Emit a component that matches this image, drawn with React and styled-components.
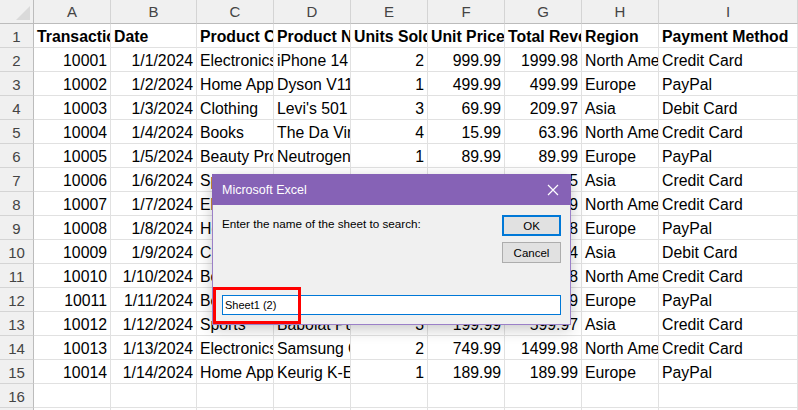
import React from 'react';
import styled, { createGlobalStyle } from 'styled-components';

const GlobalStyle = createGlobalStyle`
  html, body {
    margin: 0;
    padding: 0;
    background: #ffffff;
    overflow: hidden;
  }
  body {
    font-family: "Liberation Sans", Arial, sans-serif;
  }
`;

const Page = styled.div`
  position: relative;
  width: 798px;
  height: 410px;
  overflow: hidden;
`;

const Grid = styled.div`
  display: grid;
  grid-template-columns: 34px 77px 86px 77px 77px 77px 77px 77px 77px 1fr;
  grid-auto-rows: 24px;
`;

const Cell = styled.div`
  box-sizing: border-box;
  border-right: 1px solid #e1e1e1;
  border-bottom: 1px solid #e1e1e1;
  padding: 2px 3px 0;
  display: flex;
  align-items: center;
  justify-content: ${p => (p.$num ? 'flex-end' : 'flex-start')};
  font-size: 15.8px;
  font-weight: ${p => (p.$bold ? 700 : 400)};
  color: #000;
  white-space: nowrap;
  overflow: hidden;
`;

const ColHead = styled.div`
  box-sizing: border-box;
  background: #f0f0f0;
  border-right: 1px solid #d4d4d4;
  border-bottom: 1px solid #bcbcbc;
  display: flex;
  align-items: center;
  justify-content: center;
  font-size: 15px;
  color: #444;
`;

const Corner = styled(ColHead)`
  position: relative;
  border-right-color: #bcbcbc;
  svg {
    position: absolute;
    right: 3px;
    bottom: 3px;
  }
`;

const RowHead = styled.div`
  box-sizing: border-box;
  background: #f0f0f0;
  border-right: 1px solid #bcbcbc;
  border-bottom: 1px solid #d4d4d4;
  padding-top: 2px;
  display: flex;
  align-items: center;
  justify-content: center;
  font-size: 15px;
  color: #444;
`;

const Dialog = styled.div`
  position: absolute;
  left: 212px;
  top: 174px;
  width: 359px;
  height: 151px;
  box-sizing: border-box;
  border: 1px solid #9b80c8;
  background: #f0f0f0;
  box-shadow: 0 4px 14px rgba(0, 0, 0, 0.22);
  display: flex;
  flex-direction: column;
  font-family: "Liberation Sans", Arial, sans-serif;
`;

const TitleBar = styled.div`
  height: 31px;
  flex-shrink: 0;
  margin: -1px -1px 0;
  background: #8662b6;
  color: #ffffff;
  display: flex;
  align-items: center;
  justify-content: space-between;
  padding: 0 10px 0 10px;
  font-size: 12.5px;
`;

const CloseBtn = styled.span`
  display: flex;
  align-items: center;
  justify-content: center;
  width: 14px;
  height: 14px;
  margin-right: 1px;
`;

const Body = styled.div`
  flex: 1;
  display: flex;
  flex-direction: column;
  padding: 10px 9px 9px 9px;
`;

const Top = styled.div`
  display: flex;
  justify-content: space-between;
  flex: 1;
`;

const Message = styled.div`
  font-size: 11.7px;
  color: #000;
  padding-top: 2px;
`;

const Buttons = styled.div`
  display: flex;
  flex-direction: column;
  gap: 6px;
`;

const Button = styled.div`
  box-sizing: border-box;
  width: 59px;
  height: 21px;
  background: #e1e1e1;
  border: ${p => (p.$default ? '2px solid #0078d7' : '1px solid #adadad')};
  display: flex;
  align-items: center;
  justify-content: center;
  font-size: 11.5px;
  color: #000;
`;

const Input = styled.div`
  box-sizing: border-box;
  height: 20px;
  background: #ffffff;
  border: 1px solid #0078d7;
  display: flex;
  align-items: center;
  padding-left: 2px;
  font-size: 11px;
  color: #000;
`;

const Highlight = styled.div`
  position: absolute;
  left: 0px;
  top: 112px;
  width: 88px;
  height: 37px;
  box-sizing: border-box;
  border: 3px solid #ff0000;
`;

const cols = ['A', 'B', 'C', 'D', 'E', 'F', 'G', 'H', 'I'];
const numCols = [0, 1, 4, 5, 6];

const header = ['Transaction ID', 'Date', 'Product Category', 'Product Name', 'Units Sold', 'Unit Price', 'Total Revenue', 'Region', 'Payment Method'];

const rows = [
  ['10001', '1/1/2024', 'Electronics', 'iPhone 14 Pro', '2', '999.99', '1999.98', 'North America', 'Credit Card'],
  ['10002', '1/2/2024', 'Home Appliances', 'Dyson V11 Vacuum', '1', '499.99', '499.99', 'Europe', 'PayPal'],
  ['10003', '1/3/2024', 'Clothing', "Levi's 501 Jeans", '3', '69.99', '209.97', 'Asia', 'Debit Card'],
  ['10004', '1/4/2024', 'Books', 'The Da Vinci Code', '4', '15.99', '63.96', 'North America', 'Credit Card'],
  ['10005', '1/5/2024', 'Beauty Products', 'Neutrogena Skincare', '1', '89.99', '89.99', 'Europe', 'PayPal'],
  ['10006', '1/6/2024', 'Sports', 'Wilson Basketball', '5', '29.99', '149.95', 'Asia', 'Credit Card'],
  ['10007', '1/7/2024', 'Electronics', 'MacBook Pro 16', '1', '2399.99', '2399.99', 'North America', 'Credit Card'],
  ['10008', '1/8/2024', 'Home Appliances', 'Samsung Fridge', '2', '799.99', '1599.98', 'Europe', 'PayPal'],
  ['10009', '1/9/2024', 'Clothing', 'Nike T-Shirt', '6', '9.99', '59.94', 'Asia', 'Debit Card'],
  ['10010', '1/10/2024', 'Books', 'Atomic Habits', '2', '14.99', '29.98', 'North America', 'Credit Card'],
  ['10011', '1/11/2024', 'Beauty Products', 'Olay Cream', '1', '29.99', '29.99', 'Europe', 'PayPal'],
  ['10012', '1/12/2024', 'Sports', 'Babolat Pure Drive', '3', '199.99', '599.97', 'Asia', 'Credit Card'],
  ['10013', '1/13/2024', 'Electronics', 'Samsung Galaxy S23', '2', '749.99', '1499.98', 'North America', 'Credit Card'],
  ['10014', '1/14/2024', 'Home Appliances', 'Keurig K-Elite', '1', '189.99', '189.99', 'Europe', 'PayPal'],
];

const CornerTriangle = () => (
  <svg width="14" height="14" viewBox="0 0 14 14">
    <polygon points="14,0 14,14 0,14" fill="#dadada" />
  </svg>
);

const CloseIcon = () => (
  <svg width="12" height="12" viewBox="0 0 12 12">
    <path d="M1 1 L11 11 M11 1 L1 11" stroke="#ffffff" strokeWidth="1.2" />
  </svg>
);

export default function App() {
  return (
    <Page>
      <GlobalStyle />
      <Grid>
        <Corner>
          <CornerTriangle />
        </Corner>
        {cols.map(c => (
          <ColHead key={c}>{c}</ColHead>
        ))}

        <RowHead>1</RowHead>
        {header.map((h, i) => (
          <Cell key={i} $bold>{h}</Cell>
        ))}

        {rows.map((r, ri) => (
          <React.Fragment key={ri}>
            <RowHead>{ri + 2}</RowHead>
            {r.map((v, ci) => (
              <Cell key={ci} $num={numCols.includes(ci)}>{v}</Cell>
            ))}
          </React.Fragment>
        ))}

        <RowHead>16</RowHead>
        {cols.map(c => (
          <Cell key={c} />
        ))}
        <RowHead>17</RowHead>
        {cols.map(c => (
          <Cell key={c} />
        ))}
      </Grid>

      <Dialog>
        <TitleBar>
          <span>Microsoft Excel</span>
          <CloseBtn>
            <CloseIcon />
          </CloseBtn>
        </TitleBar>
        <Body>
          <Top>
            <Message>Enter the name of the sheet to search:</Message>
            <Buttons>
              <Button $default>OK</Button>
              <Button>Cancel</Button>
            </Buttons>
          </Top>
          <Input>Sheet1 (2)</Input>
        </Body>
        <Highlight />
      </Dialog>
    </Page>
  );
}
